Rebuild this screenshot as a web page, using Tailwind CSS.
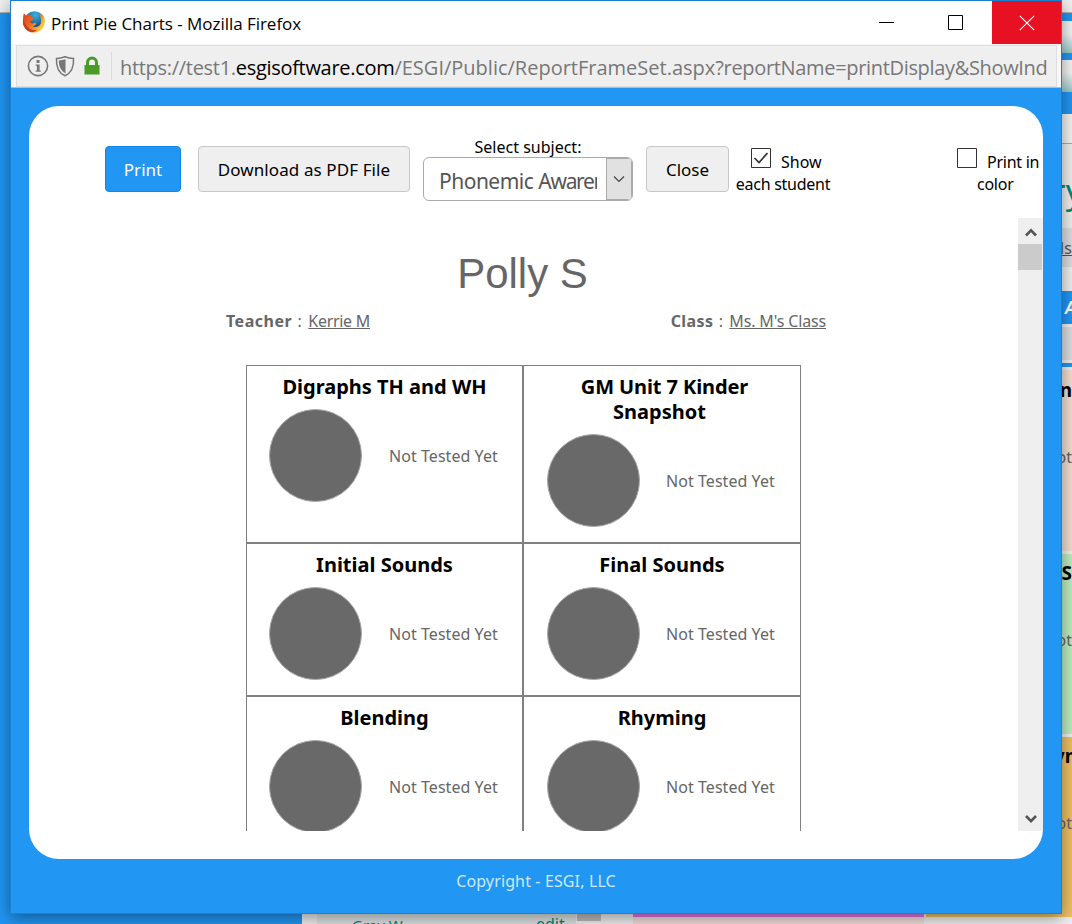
<!DOCTYPE html>
<html lang="en">
<head>
<meta charset="utf-8">
<title>Print Pie Charts</title>
<script src="https://cdn.jsdelivr.net/npm/@tailwindcss/browser@4"></script>
</head>
<body class="relative h-[924px] w-[1072px] overflow-hidden bg-[#2196f3] font-['Noto_Sans','Open_Sans',sans-serif] text-[16px] text-black">

<!-- Page behind the popup -->
<div class="flex h-full flex-col">
  <div class="h-[13px] shrink-0 border-b border-[#b5b5b5] bg-[#f0f0f0]"></div>
  <div class="flex h-[897px] justify-end">
    <div class="w-[12px] overflow-hidden bg-[#f0f0f0] whitespace-nowrap">
      <div class="h-[8px] bg-[#2196f3]"></div>
      <div class="h-[32px] bg-linear-to-b from-[#f5f5f5] from-40% to-[#95cbca]"></div>
      <div class="h-[7px] bg-[#2196f3]"></div>
      <div class="h-[32px] bg-linear-to-b from-[#f5f5f5] from-40% to-[#95cbca]"></div>
      <div class="h-[22px] bg-[#2196f3]"></div>
      <div class="h-[30px] border-b border-[#aaa] bg-[#f4f4f4]"></div>
      <div class="flex h-[84px] justify-end text-[34px] leading-[94px] text-[#00897b]"><span class="-mr-[11px]">ry</span></div>
      <div class="flex h-[39px] justify-end bg-[#dcdee3] text-[16px] leading-[40px] text-[#555]"><span class="underline">Ms</span></div>
      <div class="h-[24px]"></div>
      <div class="h-[33px] bg-[#2196f3] pl-[5px] text-[17px] leading-[34px] font-bold text-white italic">A</div>
      <div class="my-[3px] h-[33px] bg-[#dcdee3]"></div>
      <div class="h-[4px] bg-[#2196f3]"></div>
      <div class="mt-[3px] flex h-[181px] flex-col items-end bg-[#f3e0d2]">
        <b class="mt-[3px] text-[19px] leading-[34px]">n</b>
        <span class="mt-[38px] leading-[24px] text-[#666]">ot</span>
      </div>
      <div class="mt-[3px] flex h-[180px] flex-col items-end bg-[#bdeec0]">
        <b class="mt-[2px] text-[19px] leading-[34px]">S</b>
        <span class="mt-[38px] leading-[24px] text-[#666]">ot</span>
      </div>
      <div class="mt-[3px] flex h-[181px] flex-col items-end bg-[#f1c163]">
        <b class="-mr-[5px] mt-[2px] text-[19px] leading-[34px]">yn</b>
        <span class="mt-[38px] leading-[24px] text-[#666]">ot</span>
      </div>
    </div>
  </div>
  <div class="flex h-[14px] shrink-0 overflow-hidden bg-[#f0f0f0] text-[15px] text-[#00897b]">
    <div class="w-[302px] bg-[#2196f3]"></div>
    <div class="w-[15px]"></div>
    <div class="flex w-[259px] gap-[144px] bg-[#dfe3e3] pl-[35px]"><span class="w-[40px] pt-[4px] whitespace-nowrap">Gray W</span><span class="pt-[2px] text-[16px]">edit</span></div>
    <div class="ml-px h-[11px] w-[24px] bg-[#bdbdbd]"></div>
    <div class="ml-[32px] w-[291px] border-t-[7px] border-[#e477da] bg-[#f3dede]"></div>
    <div class="ml-[2px] flex-1 border-t-[7px] border-[#f1c163]"></div>
  </div>
</div>

<!-- Browser popup window -->
<div class="absolute top-0 left-[10px] flex h-[914px] w-[1052px] flex-col border border-[#1a80d2] bg-[#2196f3] shadow-[0_4px_16px_rgba(0,0,0,0.42)]">

  <header class="flex h-[43px] shrink-0 items-start bg-white">
    <svg class="mt-[9px] ml-[11px] h-[24px] w-[24px]" viewBox="0 0 24 24">
      <defs>
        <radialGradient id="globe" cx="55%" cy="20%" r="70%"><stop offset="0" stop-color="#39b5e0"/><stop offset="1" stop-color="#123a78"/></radialGradient>
        <linearGradient id="fox" x1="0" y1="0" x2="1" y2="0.6"><stop offset="0" stop-color="#d8401c"/><stop offset=".5" stop-color="#ee6a1c"/><stop offset="1" stop-color="#fbd43a"/></linearGradient>
      </defs>
      <circle cx="12.5" cy="11" r="9.8" fill="url(#globe)"/>
      <path d="M1.8 3.2 4.2 5.4 7 4.6 9.8 5.2 8.8 7.2 11.4 8.6 10.4 10.4 8.2 11 8.6 12.8Q10.4 14 12.3 12.8L14.3 12.9Q13.6 16.2 10.4 16.4 15.7 18.6 18.7 13.8 20 10.4 18.3 6.2L17 3.4Q19.4 4.2 20.6 6.4L20.4 4Q23.2 7.6 22.8 12.2 22 19.4 15.2 22.2 8.4 23.8 3.8 19.2.2 15.2 1 9.6 1 6.4 1.8 3.2Z" fill="url(#fox)"/>
      <path d="M1.8 8.2Q2 14.6 7 18.6 11 21 15.4 19.8 11 23.8 6.2 21 .4 16.8 1 10.4Z" fill="#c93a20"/>
    </svg>
    <h1 class="ml-[5px] flex-1 font-['Open_Sans'] text-[17px] leading-[46px] tracking-[-0.04px] whitespace-nowrap">Print Pie Charts - Mozilla Firefox</h1>
    <svg class="mt-[10px] mr-[26px] h-[24px] w-[88px]" viewBox="0 0 88 24" fill="none" stroke="#000"><path d="M1 11.5h15M70.500 4.500h14v14h-14z"/></svg>
    <div class="flex h-[43px] w-[69px] items-center justify-center bg-[#e81123]">
      <svg class="h-[16px] w-[16px]" viewBox="0 0 16 16" stroke="#fff" stroke-width="1.1"><path d="M.8 .8 15.2 15.2M15.200 .8 .8 15.200"/></svg>
    </div>
  </header>

  <div class="flex h-[44px] shrink-0 border-b border-[#bcbcbc] bg-[#f7f7f7] pr-[4px] pl-[5px]">
    <div class="mt-px flex min-w-0 flex-1 items-center border border-[#dedede] bg-[#efefef] pl-[9px]">
      <svg class="mt-[2px] h-[24px] w-[76px] shrink-0" viewBox="0 0 76 24">
        <circle cx="12" cy="11" r="9.600" fill="none" stroke="#777" stroke-width="1.600"/>
        <path d="M10.500 5h3v3h-3zM9.700 9.500h3.900v6h1.200v1.200H9.700v-1.200h1.200v-4.800H9.700z" fill="#777"/>
        <path d="M39 1.800Q34.600 3.400 30.500 3.400 29.600 16.500 39 20.800 48.400 16.500 47.500 3.400 43.400 3.400 39 1.800Z" fill="none" stroke="#777" stroke-width="1.500"/>
        <path d="M39.500 4.200Q36 5.300 32.700 5.500 32.800 15 39.500 18.400Z" fill="#777"/>
        <path d="M60 10V7.500a6 6 0 0 1 12 0V10h1.500v9.500H58.500V10zM63 10h6V7.500a3 3 0 0 0-6 0z" fill="#4b9a27" fill-rule="evenodd"/>
      </svg>
      <div class="mr-[8px] ml-[9px] h-[28px] w-px shrink-0 bg-[#dadada]"></div>
      <div class="flex-1 pt-[3px] font-['Open_Sans'] text-[20px] leading-[38px] whitespace-nowrap text-[#777]"><span class="tracking-[-0.3px]">https://test1.<span class="text-black">esgisoftware.com</span></span>/ESGI/Public/ReportFrameSet.aspx<span class="tracking-[-0.33px]">?reportName=printDisplay&amp;ShowInd</span></div>
    </div>
  </div>

  <main class="mx-[18px] mt-[18px] flex h-[753px] shrink-0 flex-col overflow-hidden rounded-[30px] bg-white">
    <!-- Toolbar -->
    <div class="flex h-[112px] shrink-0 items-start pl-[76px] whitespace-nowrap">
      <button class="mt-[40px] h-[46px] w-[76px] rounded-[4px] border border-[#0f86ec] bg-[#2196f3] pt-px text-[17px] text-white">Print</button>
      <button class="mt-[40px] ml-[17px] h-[46px] w-[212px] rounded-[4px] border border-[#c8c8c8] bg-[#efefef] pt-px text-[17px]"><span class="tracking-[0.1px]">Download as PDF File</span></button>
      <label class="mt-[30px] ml-[13px] flex w-[210px] flex-col text-center leading-[21px]">
        <span class="relative top-px">Select subject:</span>
        <span class="flex h-[44px] overflow-hidden rounded-[6px] border border-[#aaa] pl-[15px] text-left text-[21px] leading-[46px] text-[#555]">
          <span class="w-[158px] overflow-hidden tracking-[-0.5px]">Phonemic <span class="tracking-[-1.3px]">Awareness</span></span>
          <span class="ml-[9px] flex flex-1 items-center justify-center border border-[#aaa] bg-[#e1e1e1]">
            <svg class="mr-px h-[8px] w-[12px]" viewBox="0 0 12 8" fill="none" stroke="#444" stroke-width="1.200"><path d="M1 1.500 6 6.500 11 1.500"/></svg>
          </span>
        </span>
      </label>
      <button class="mt-[40px] ml-[13px] h-[46px] w-[83px] rounded-[4px] border border-[#c8c8c8] bg-[#efefef] pt-px text-[17px]">Close</button>
      <label class="mt-[42px] ml-[4px] w-[100px] text-center leading-[22px]">
        <span class="flex h-[25px] pl-[18px]">
          <svg class="h-[20px] w-[20px]" viewBox="0 0 20 20" fill="none" stroke="#333"><path d="M.5 .5h19v19H.5z"/><path d="M3.500 10 8 14.500 16.500 5" stroke-width="1.700"/></svg>
          <span class="ml-[10px] pt-[3px]">Show</span>
        </span>
        <span class="tracking-[-0.25px]">each student</span>
      </label>
      <label class="mt-[42px] ml-[124px] w-[84px] leading-[22px]">
        <span class="flex h-[25px]">
          <svg class="h-[20px] w-[20px]" viewBox="0 0 20 20" fill="none" stroke="#333"><path d="M.5 .5h19v19H.5z"/></svg>
          <span class="ml-[10px] pt-[3px] tracking-[-0.25px]">Print in</span>
        </span>
        <span class="ml-[20px] tracking-[-0.25px]">color</span>
      </label>
    </div>

    <!-- Scrolling report -->
    <div class="flex h-[613px] shrink-0 overflow-hidden text-[#666]">
      <section class="flex w-[989px] flex-col items-center overflow-hidden whitespace-nowrap">
        <h2 class="mt-[31px] mr-[2px] h-[50px] font-['Liberation_Sans'] text-[42px] leading-[50px]">Polly S</h2>
        <div class="mt-[11px] ml-[5px] flex w-[600px] justify-between leading-[22px]">
          <span class="tracking-[-0.3px]"><b class="tracking-[0.5px]">Teacher</b><span class="tracking-[1.2px]"> : </span><u>Kerrie M</u></span>
          <span class="tracking-[-0.15px]"><b class="tracking-[0.4px]">Class</b><span class="tracking-[1.1px]"> : </span><u>Ms. M's Class</u></span>
        </div>
        <div class="mt-[33px] grid w-[555px] shrink-0 grid-cols-[276px_278px] grid-rows-[177px_153px_153px] border-t border-l border-[#808080]">
          <article class="border-r border-b border-[#808080] pt-[8px]">
            <h3 class="text-center text-[20px] leading-[25px] font-bold text-black">Digraphs TH and WH</h3>
            <div class="mt-[10px] flex items-center pl-[22px]"><span class="h-[93px] w-[93px] rounded-full border border-[#aaa] bg-[#696969]"></span><span class="ml-[27px] tracking-[0.05px]">Not Tested Yet</span></div>
          </article>
          <article class="border-r border-b border-l border-[#808080] pt-[8px]">
            <h3 class="text-center text-[20px] leading-[25px] font-bold text-black"><span class="ml-[5px] tracking-[-0.1px]">GM Unit 7 Kinder</span><br><span class="-ml-[5px]">Snapshot</span></h3>
            <div class="mt-[10px] flex items-center pl-[23px]"><span class="h-[93px] w-[93px] rounded-full border border-[#aaa] bg-[#696969]"></span><span class="ml-[26px] tracking-[0.05px]">Not Tested Yet</span></div>
          </article>
          <article class="border-t border-r border-b border-[#808080] pt-[8px]">
            <h3 class="text-center text-[20px] leading-[25px] font-bold text-black">Initial Sounds</h3>
            <div class="mt-[10px] flex items-center pl-[22px]"><span class="h-[93px] w-[93px] rounded-full border border-[#aaa] bg-[#696969]"></span><span class="ml-[27px] tracking-[0.05px]">Not Tested Yet</span></div>
          </article>
          <article class="border border-[#808080] pt-[8px]">
            <h3 class="text-center text-[20px] leading-[25px] font-bold text-black">Final Sounds</h3>
            <div class="mt-[10px] flex items-center pl-[23px]"><span class="h-[93px] w-[93px] rounded-full border border-[#aaa] bg-[#696969]"></span><span class="ml-[26px] tracking-[0.05px]">Not Tested Yet</span></div>
          </article>
          <article class="border-t border-r border-[#808080] pt-[8px]">
            <h3 class="text-center text-[20px] leading-[25px] font-bold text-black">Blending</h3>
            <div class="mt-[10px] flex items-center pl-[22px]"><span class="h-[93px] w-[93px] rounded-full border border-[#aaa] bg-[#696969]"></span><span class="ml-[27px] tracking-[0.05px]">Not Tested Yet</span></div>
          </article>
          <article class="border-t border-r border-l border-[#808080] pt-[8px]">
            <h3 class="text-center text-[20px] leading-[25px] font-bold text-black">Rhyming</h3>
            <div class="mt-[10px] flex items-center pl-[23px]"><span class="h-[93px] w-[93px] rounded-full border border-[#aaa] bg-[#696969]"></span><span class="ml-[26px] tracking-[0.05px]">Not Tested Yet</span></div>
          </article>
        </div>
      </section>
      <div class="flex w-[25px] flex-col items-center bg-[#efefef]">
        <svg class="mt-[9px] h-[10px] w-[12px]" viewBox="0 0 12 10" fill="none" stroke="#555" stroke-width="2.600"><path d="M1 8.500 6 3.300 11 8.500"/></svg>
        <div class="mt-[7px] mr-px h-[26px] w-[24px] bg-[#cbcbcb]"></div>
        <svg class="mt-auto mb-[7px] h-[10px] w-[12px]" viewBox="0 0 12 10" fill="none" stroke="#555" stroke-width="2.600"><path d="M1 2 6 7.200 11 2"/></svg>
      </div>
    </div>
  </main>

  <footer class="pt-[11px] text-center leading-[22px] text-[#cdeaf6]"><span class="tracking-[0.13px]">Copyright - ESGI, LLC</span></footer>
</div>
</body>
</html>
